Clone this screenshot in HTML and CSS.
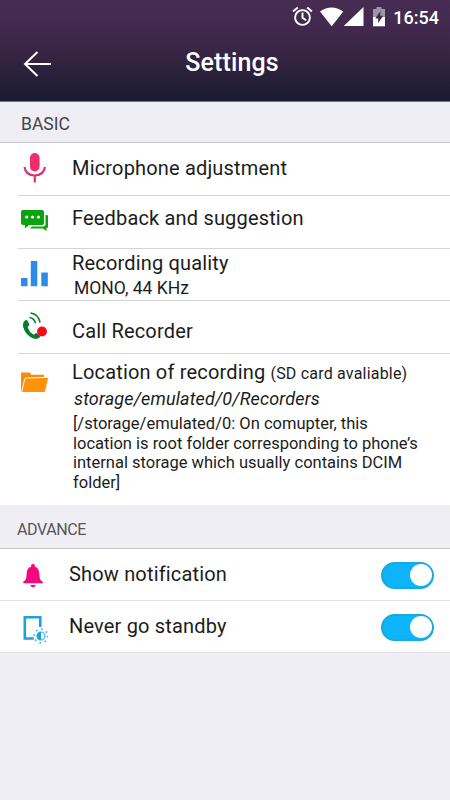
FILE: index.html
```html
<!DOCTYPE html>
<html lang="en">
<head>
  <meta charset="UTF-8" />
  <title>Settings</title>
  <link rel="stylesheet" href="styles.css">
</head>
<body>
  <header class="header">
    <div class="status-bar">
      <svg class="status-icons" width="106" height="24" viewBox="0 0 106 24">
        <!-- alarm -->
        <g fill="none" stroke="#fff" stroke-width="1.9">
          <circle cx="10.5" cy="13.5" r="7.4"/>
          <path d="M10.5 8.5v5.3l3.6 2.5M1 7.6l4.8-4M20 7.6l-4.8-4"/>
        </g>
        <!-- wifi and signal -->
        <path fill="#fff" d="M28 7.500q11.500-8 23.300 0L39.700 22.200z"/>
        <path fill="#fff" d="M71.500 3v19H51.700z"/>
        <!-- battery -->
        <path fill="#a294a8" d="M81 5h3.500V3h5v2H93v8H81z"/>
        <path fill="#fff" d="M81 13h12v9.300H81z"/>
        <path fill="#3d2948" d="M88.500 7l-5.300 7.400h3V19l5-7.200h-3z"/>
      </svg>
      <span class="clock">16:54</span>
    </div>
    <div class="title-bar">
      <svg class="back" width="30" height="28" viewBox="0 0 30 28" fill="none" stroke="#fff" stroke-width="2">
        <path d="M29 14H3M15.500 2L3 14l12.500 12"/>
      </svg>
      <h1>Settings</h1>
    </div>
  </header>

  <h2 class="section basic-title">BASIC</h2>
  <ul class="list">
    <li class="row mic">
      <svg class="icon" width="30" height="32" viewBox="0 0 30 32">
        <rect x="12" y="1" width="9.600" height="18.500" rx="4.800" fill="#ee2f6b"/>
        <path d="M6.500 15c.8 5.500 4.800 8.500 10.200 8.500S26.100 20.500 27 15M16.800 23.500v7" fill="none" stroke="#d93377" stroke-width="2.200"/>
      </svg>
      <div class="text"><p class="name">Microphone adjustment</p></div>
    </li>
    <li class="row feedback">
      <svg class="icon" width="30" height="32" viewBox="0 0 30 32" fill="#0aa30e">
        <path d="M5 5h19q2 0 2 2v11q0 2-2 2H11l-4 3.500V20H5q-2 0-2-2V7q0-2 2-2z"/>
        <path d="M27.500 10h1q1.700 0 1.700 2v9.500q0 1.500-1.700 1.500v3L25 23.500H12l2-2h11.500q2 0 2-2z"/>
        <g fill="#fff"><circle cx="8.800" cy="12" r="1.600"/><circle cx="14.600" cy="12" r="1.600"/><circle cx="20.400" cy="12" r="1.600"/></g>
      </svg>
      <div class="text"><p class="name">Feedback and suggestion</p></div>
    </li>
    <li class="row quality">
      <svg class="icon" width="30" height="32" viewBox="0 0 30 32" fill="#2b8be6">
        <path d="M3 20h6.500v8.300H3zM12.800 3h6.500v25.300h-6.500zM23.300 14.500h6.500v13.800h-6.500z"/>
      </svg>
      <div class="text">
        <p class="name">Recording quality</p>
        <p class="value">MONO, 44 KHz</p>
      </div>
    </li>
    <li class="row call">
      <svg class="icon" width="30" height="32" viewBox="0 0 30 32">
        <path fill="#087c2d" d="M7 10.500q1.800-1.300 2.500.2l1.800 3.600q.5 1-.8 1.800-1 .7-.6 1.800 1.500 4.200 5 6.300 1.200.6 2-.3 1-1.300 2.300-.5l2.600 2q1 .9 0 1.900-2.500 2.400-6.300 1.200Q7.500 25.500 5.200 17q-.9-4.500 1.800-6.500z"/>
        <path fill="none" stroke="#087c2d" stroke-width="1.600" d="M11.500 7.500q5 .8 6 5.800M12.500 3q8 1 9.600 9.500"/>
        <circle cx="24" cy="21.500" r="4.900" fill="#f50a18"/>
      </svg>
      <div class="text"><p class="name">Call Recorder</p></div>
    </li>
    <li class="row location">
      <svg class="icon" width="30" height="32" viewBox="0 0 30 32">
        <path fill="#f48c0c" d="M3 5.500h8.800l1.500 2.300H26V25H3z"/>
        <path fill="#ff920b" stroke="#fff" stroke-width="1" d="M3.500 25.500L6.700 12q.4-1 1.600-1l22.500-.7-3.300 14.200q-.3 1-1.500 1z"/>
      </svg>
      <div class="text">
        <p class="name">Location of recording <small>(SD card avaliable)</small></p>
        <p class="path">storage/emulated/0/Recorders</p>
        <p class="note">[/storage/emulated/0: On comupter, this<br>location is root folder corresponding to phone’s<br>internal storage which usually contains DCIM<br>folder]</p>
      </div>
    </li>
  </ul>

  <h2 class="section advance-title">ADVANCE</h2>
  <ul class="list advance">
    <li class="row">
      <svg class="icon" width="30" height="32" viewBox="0 0 30 32" fill="#f5077e">
        <circle cx="15" cy="6" r="2"/>
        <path d="M15 6.500c5 0 6.200 3.500 6.400 8.500.1 4 1.200 5.500 3.300 6.500v1.700H5.300v-1.700c2.100-1 3.200-2.500 3.300-6.500.2-5 1.400-8.500 6.400-8.500zM12.300 25h5.400q-.5 2.300-2.700 2.300T12.300 25z"/>
      </svg>
      <div class="text"><p class="name">Show notification</p></div>
      <span class="switch"></span>
    </li>
    <li class="row">
      <svg class="icon" width="30" height="32" viewBox="0 0 30 32">
        <path fill="none" stroke="#1ba4dc" stroke-width="2.600" d="M22.300 15V5.300H6.800v21.200h9"/>
        <g stroke="#35b2e3" fill="none">
          <circle cx="23" cy="24" r="4" stroke-width="1.200"/>
          <circle cx="23" cy="24" r="6.800" stroke-width="1.700" stroke-dasharray="1.500 3.840"/>
        </g>
        <path fill="#1ba4dc" d="M23 20a4 4 0 0 0 0 8z"/>
      </svg>
      <div class="text"><p class="name">Never go standby</p></div>
      <span class="switch"></span>
    </li>
  </ul>
</body>
</html>
```
FILE: styles.css
```css
* {
  box-sizing: border-box;
}
body {
  margin: 0;
  min-height: 800px;
  background-color: #efeef4;
  font-family: Roboto, sans-serif;
  color: #1c1c1c;
}
h1, h2, p, ul {
  margin: 0;
  padding: 0;
  font-weight: 400;
}
.header {
  height: 102px;
  background: linear-gradient(#472d53 0, #41294e 28px, #342440 60px, #191b30 98px, #191b30);
  border-bottom: 1px solid #777583;
  color: #fff;
}
.status-bar {
  display: flex;
  height: 34px;
  padding: 4px 11px 0 0;
  justify-content: flex-end;
}
.status-icons {
  margin-right: -5px;
}
.clock {
  font-size: 18px;
  font-weight: 500;
  line-height: 27px;
}
.title-bar {
  display: grid;
  grid-template-columns: 52px 1fr 38px;
  height: 60px;
  align-items: center;
}
.back {
  margin-left: 22px;
}
h1 {
  font-size: 25px;
  font-weight: 500;
  line-height: 30px;
  letter-spacing: 0.1px;
  text-align: center;
  padding-bottom: 3px;
}
.section {
  color: #444;
  border-bottom: 1px solid #c9c8ce;
}
.basic-title {
  height: 41px;
  padding-left: 21px;
  font-size: 17.5px;
  line-height: 45px;
}
.advance-title {
  height: 44px;
  padding-left: 17px;
  font-size: 16px;
  line-height: 50px;
  letter-spacing: -0.4px;
  color: #55555a;
}
.list {
  list-style: none;
  padding-left: 18px;
  background-color: #fff;
}
.row {
  display: grid;
  grid-template-columns: 54px 1fr auto;
  height: 53px;
  border-bottom: 1px solid #d4d4d4;
}
.icon {
  margin-top: 9px;
}
.text {
  padding-top: 10px;
}
.name {
  font-size: 20px;
  line-height: 30px;
  letter-spacing: 0.17px;
  white-space: nowrap;
}
.name small {
  font-size: 16px;
  letter-spacing: 0.2px;
}
.feedback .text {
  padding-top: 7px;
}
.quality .text {
  padding-top: 0;
}
.quality .name {
  line-height: 29px;
}
.quality {
  height: 52px;
}
.value {
  padding-left: 2px;
  font-size: 17.5px;
  line-height: 20px;
}
.call .text {
  padding-top: 15px;
}
.location {
  height: 151px;
  border-bottom: none;
}
.location .icon {
  margin-top: 13px;
}
.location .text {
  padding-top: 3px;
}
.path {
  padding-left: 2px;
  font-size: 18px;
  font-style: italic;
  line-height: 20px;
  letter-spacing: 0.15px;
}
.note {
  padding: 5px 0 0 1px;
  font-size: 16.5px;
  line-height: 19.5px;
  white-space: nowrap;
}
.advance {
  padding-left: 0;
}
.advance .row {
  grid-template-columns: 69px 1fr auto;
  height: 52px;
  border-color: #e0e0e3;
}
.advance .icon {
  margin: 11px 0 0 18px;
}
.switch {
  width: 53px;
  height: 27px;
  margin: 13px 16px 0 0;
  border: 2px solid #18a9e0;
  border-radius: 14px;
  background-color: #0eb4fa;
}
.switch::after {
  content: "";
  display: block;
  width: 22px;
  height: 22px;
  margin-left: auto;
  border-radius: 50%;
  background-color: #fff;
}
```
